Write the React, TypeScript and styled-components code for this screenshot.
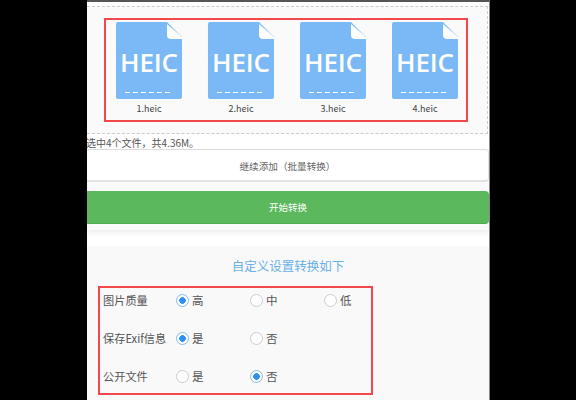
import styled, { createGlobalStyle } from 'styled-components'

const GlobalStyle = createGlobalStyle`
  html, body {
    margin: 0;
    padding: 0;
    background: #000;
    font-family: "Noto Sans CJK SC", "Liberation Sans", sans-serif;
  }
`

const files = ['1.heic', '2.heic', '3.heic', '4.heic']

const settings = [
  { label: '图片质量', options: ['高', '中', '低'], checked: 0 },
  { label: '保存Exif信息', options: ['是', '否'], checked: 0 },
  { label: '公开文件', options: ['是', '否'], checked: 1 },
]

function HeicIcon() {
  return (
    <svg width="66" height="77" viewBox="0 0 66 77">
      <path d="M2 0H51L66 15V75a2 2 0 0 1-2 2H2a2 2 0 0 1-2-2V2a2 2 0 0 1 2-2Z" fill="#7ab9f6" />
      <path d="M51 2L66 15V17H55a4 4 0 0 1-4-4Z" fill="#fff" />
      <text
        x="33"
        y="50"
        textAnchor="middle"
        fontFamily="'Open Sans', sans-serif"
        fontWeight="600"
        fontSize="26"
        fill="#fff"
        textLength="58"
      >
        HEIC
      </text>
      <path d="M9 70.5H55" stroke="#fff" strokeWidth="1" strokeDasharray="5 3" />
    </svg>
  )
}

function App() {
  return (
    <>
      <GlobalStyle />
      <Page>
        <DropArea>
          <FileBox>
            {files.map((name) => (
              <FileItem key={name}>
                <HeicIcon />
                <FileName>{name}</FileName>
              </FileItem>
            ))}
          </FileBox>
        </DropArea>
        <Summary>选中4个文件，共4.36M。</Summary>
        <ButtonPanel>
          <AddButton>继续添加（批量转换）</AddButton>
          <StartButton>开始转换</StartButton>
        </ButtonPanel>
        <Settings>
          <SettingsTitle>自定义设置转换如下</SettingsTitle>
          <SettingsBox>
            {settings.map((row) => (
              <SettingRow key={row.label}>
                <SettingLabel>{row.label}</SettingLabel>
                {row.options.map((opt, i) => (
                  <RadioItem key={opt}>
                    <Radio $checked={i === row.checked} />
                    {opt}
                  </RadioItem>
                ))}
              </SettingRow>
            ))}
          </SettingsBox>
        </Settings>
      </Page>
    </>
  )
}

const Page = styled.div`
  width: 403px;
  height: 400px;
  margin-left: 87px;
  overflow: hidden;
  background: #fff;
  border-right: 1px solid #888;
  border-top: 2px solid #555;
  box-sizing: border-box;
  color: #555;
`

const DropArea = styled.div`
  height: 128px;
  margin: 4px 1px 0 0;
  padding: 11px 20px 0 17px;
  box-sizing: border-box;
  background: #fafafa;
  border-top: 1px dashed #ccc;
  border-right: 1px dashed #ccc;
  border-bottom: 1px dashed #ccc;
`

const FileBox = styled.div`
  width: 364px;
  height: 104px;
  box-sizing: border-box;
  border: 2px solid #f4474b;
  padding: 2px 0 0 10px;
  display: flex;
  gap: 26px;
`

const FileItem = styled.div`
  width: 66px;
  display: flex;
  flex-direction: column;
  align-items: center;
  gap: 3px;

  svg {
    display: block;
  }
`

const FileName = styled.div`
  font-size: 9px;
  line-height: 13px;
  color: #444;
`

const Summary = styled.div`
  height: 15px;
  line-height: 18px;
  font-size: 10px;
  margin-left: -1px;
  color: #555;
`

const ButtonPanel = styled.div`
  height: 81px;
  box-sizing: border-box;
  background: #fafafa;
  box-shadow: 0 3px 5px rgba(0, 0, 0, 0.07);
`

const AddButton = styled.div`
  height: 33px;
  box-sizing: border-box;
  background: #fff;
  border-top: 1px solid #ddd;
  border-bottom: 2px solid #e2e2e2;
  border-right: 1px solid #e2e2e2;
  border-radius: 0 4px 4px 0;
  font-size: 9.6px;
  line-height: 33px;
  text-align: center;
  color: #666;
`

const StartButton = styled.div`
  height: 33px;
  margin-top: 9px;
  box-sizing: border-box;
  background: #5cb85c;
  border-bottom: 1px solid #4cae4c;
  border-radius: 0 4px 4px 0;
  font-size: 9.5px;
  line-height: 33px;
  text-align: center;
  color: #fff;
`

const Settings = styled.div`
  margin-top: 16px;
  padding-top: 10px;
  height: 160px;
  box-sizing: border-box;
  background: #f9f9f9;
`

const SettingsTitle = styled.div`
  font-size: 12.5px;
  line-height: 20px;
  text-align: center;
  color: #6ab0e8;
`

const SettingsBox = styled.div`
  width: 275px;
  height: 109px;
  margin: 10px 0 0 11px;
  padding: 2px 3px 0;
  box-sizing: border-box;
  border: 2px solid #f4474b;
  display: flex;
  flex-direction: column;
  gap: 18px;
`

const SettingRow = styled.div`
  display: flex;
  align-items: center;
  height: 20px;
`

const SettingLabel = styled.div`
  flex: 0 0 73px;
  font-size: 11.2px;
  white-space: nowrap;
  color: #555;
`

const RadioItem = styled.div`
  flex: 0 0 74px;
  display: flex;
  align-items: center;
  gap: 3px;
  font-size: 11.5px;
  color: #555;

  &:nth-child(4) {
    flex-basis: auto;
  }
`

const Radio = styled.span<{ $checked: boolean }>`
  width: 13px;
  height: 13px;
  box-sizing: border-box;
  border-radius: 50%;
  border: 1px solid ${(p) => (p.$checked ? '#7fbdf5' : '#ccc')};
  background: ${(p) =>
    p.$checked
      ? 'radial-gradient(circle, #2f8ff0 0, #2f8ff0 3px, #fff 3.6px)'
      : '#fff'};
`

export default App
